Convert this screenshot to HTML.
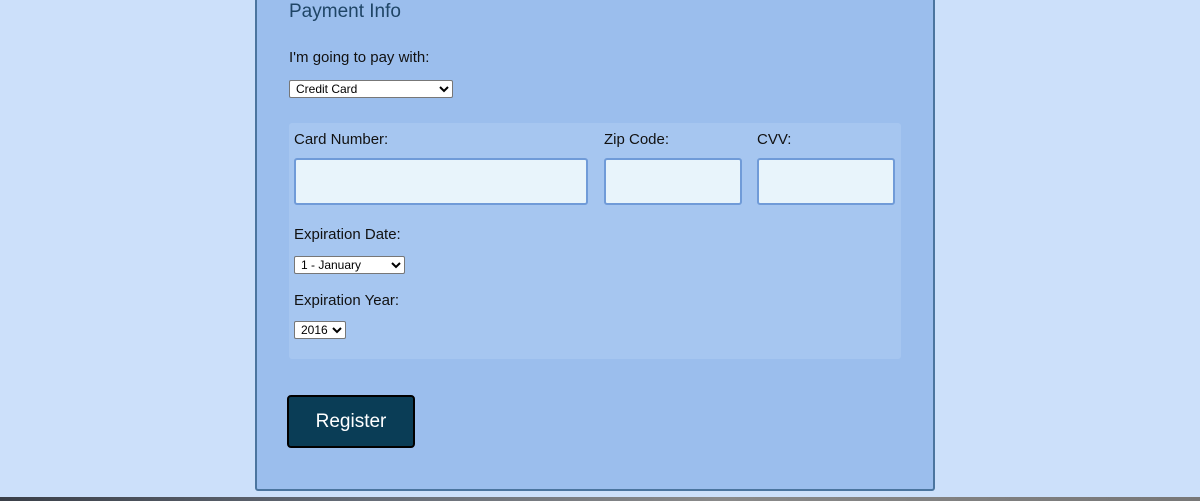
<!DOCTYPE html>
<html><head><style>
*{box-sizing:border-box;margin:0;padding:0}
body{width:1200px;height:501px;overflow:hidden;background:#cce0fa;font-family:"Liberation Sans",sans-serif;position:relative;color:#111}
.panel{position:absolute;left:255px;top:-10px;width:680px;height:501px;background:#9bbeed;border:2px solid #4b759f;border-radius:3px}
.a{position:absolute}
h2{position:absolute;left:289px;top:1px;font-size:19px;font-weight:normal;color:#1f4566}
.lbl{font-size:15px;color:#111}
select{position:absolute;font-family:"Liberation Sans",sans-serif;font-size:12px;background:#fff;border:1px solid #777;border-radius:2px;height:18px;padding-left:2px}
.box{position:absolute;left:289px;top:123px;width:612px;height:236px;background:#a6c6f0;border-radius:3px}
.in{position:absolute;top:158px;height:47px;background:#e8f4fb;border:2px solid #709bd8;border-radius:3px}
.btn{position:absolute;left:287px;top:395px;width:128px;height:53px;background:#0a3d56;border:2px solid #000;border-radius:4px;color:#fff;font-size:19px;text-align:center;line-height:49px}
.bot{position:absolute;left:0;top:497px;width:1200px;height:4px;background:linear-gradient(90deg,#3a3f48 0%,#666d78 30%,#8a8a8a 60%,#777 100%)}
</style></head><body>
<div class="panel"></div>
<h2>Payment Info</h2>
<div class="a lbl" style="left:289px;top:49px">I'm going to pay with:</div>
<select style="left:289px;top:80px;width:164px"><option>Credit Card</option></select>
<div class="box"></div>
<div class="a lbl" style="left:294px;top:131px">Card Number:</div>
<div class="a lbl" style="left:604px;top:131px">Zip Code:</div>
<div class="a lbl" style="left:757px;top:131px">CVV:</div>
<div class="in" style="left:294px;width:294px"></div>
<div class="in" style="left:604px;width:138px"></div>
<div class="in" style="left:757px;width:138px"></div>
<div class="a lbl" style="left:294px;top:226px">Expiration Date:</div>
<select style="left:294px;top:256px;width:111px"><option>1 - January</option></select>
<div class="a lbl" style="left:294px;top:292px">Expiration Year:</div>
<select style="left:294px;top:321px;width:52px"><option>2016</option></select>
<div class="btn">Register</div>
<div class="bot"></div>
</body></html>
